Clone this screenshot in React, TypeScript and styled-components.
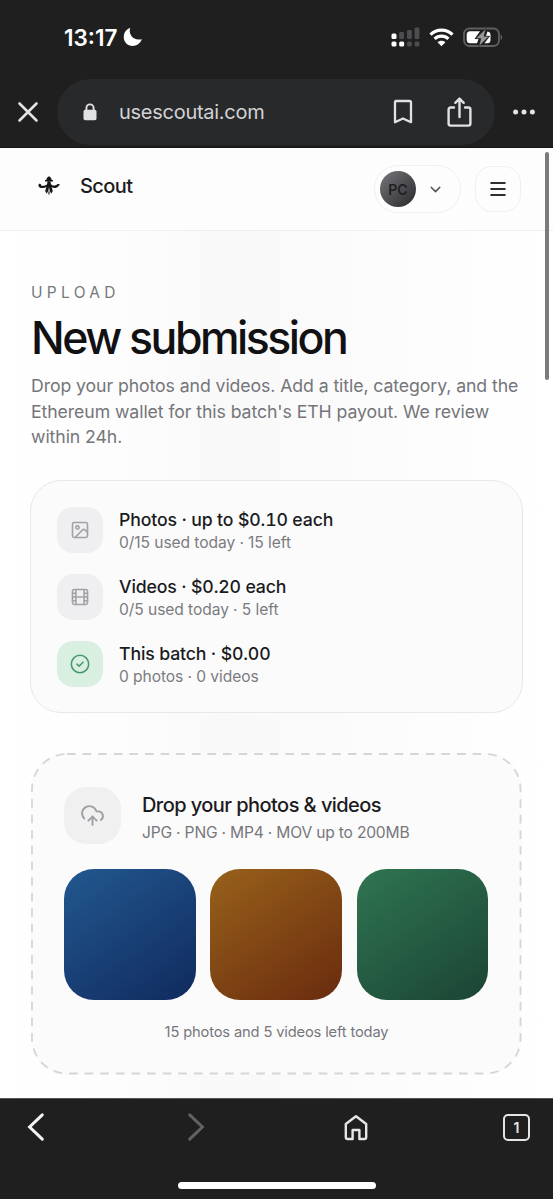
import React from 'react';
import styled, { createGlobalStyle } from 'styled-components';
import { CloudUpload, Film, Image as ImageIcon, ChevronDown } from 'lucide-react';

const GlobalStyle = createGlobalStyle`
  * { box-sizing: border-box; }
  body { margin: 0; background: #1f1f1f; }
  h1, h2, p { margin: 0; font-weight: 400; }
  svg { display: block; flex: none; }
`;

const Screen = styled.div`
  width: 553px;
  height: 1199px;
  display: flex;
  flex-direction: column;
  background: #1f1f1f;
  color: #1b1b1e;
  font-family: Inter, "Liberation Sans", sans-serif;
  overflow: hidden;
`;

const StatusBar = styled.div`
  height: 79px;
  padding: 0 50px 5px 64px;
  display: flex;
  align-items: center;
  justify-content: space-between;
  color: #fff;
`;

const Clock = styled.div`
  display: flex;
  align-items: center;
  gap: 6px;
  font-size: 22.5px;
  font-weight: 600;
  letter-spacing: 0;
`;

const StatusIcons = styled.div`
  display: flex;
  align-items: center;
  gap: 9px;
`;

const AddressRow = styled.div`
  height: 69px;
  display: flex;
  align-items: flex-start;
  padding-left: 17px;
  border-bottom: 1px solid #141414;
`;

const BarButton = styled.div`
  height: 66px;
  display: flex;
  align-items: center;
`;

const AddressPill = styled.div`
  width: 438px;
  height: 66px;
  margin: 0 18px 0 18px;
  padding: 0 23px 0 26px;
  border-radius: 33px;
  background: #28292b;
  display: flex;
  align-items: center;
`;

const Url = styled.span`
  flex: 1;
  margin-left: 22px;
  font-size: 20px;
  letter-spacing: -0.27px;
  color: #d3d3d6;
`;

const PillIcons = styled.div`
  display: flex;
  align-items: center;
  gap: 33px;
`;

const Page = styled.div`
  position: relative;
  height: 950px;
  background: linear-gradient(90deg, #ffffff 0%, #fdfdfe 20%, #f9f9fa 40%, #fafafb 55%, #fdfdfe 80%, #ffffff 100%);
`;

const ScrollThumb = styled.div`
  position: absolute;
  top: 4px;
  right: 4px;
  width: 4px;
  height: 228px;
  border-radius: 2px;
  background: #7b7b7d;
`;

const Header = styled.header`
  height: 83px;
  padding: 0 32px 0 37px;
  border-bottom: 1px solid #f0f0f2;
  background: #fdfdfd;
  display: flex;
  align-items: center;
  justify-content: space-between;
`;

const Brand = styled.div`
  display: flex;
  align-items: center;
  gap: 18px;
  padding-bottom: 7px;
  font-size: 20px;
  font-weight: 500;
  letter-spacing: -0.6px;
`;

const HeaderActions = styled.div`
  display: flex;
  align-items: center;
  gap: 14px;
`;

const AccountButton = styled.div`
  width: 87px;
  height: 48px;
  border: 1px solid #f0f0f2;
  border-radius: 24px;
  background: #fdfdfe;
  display: flex;
  align-items: center;
  gap: 11px;
  padding-left: 5px;
  color: #56565b;
`;

const Avatar = styled.div`
  width: 36px;
  height: 36px;
  border-radius: 50%;
  background: linear-gradient(135deg, #77777b 0%, #505054 50%, #29292c 100%);
  color: #202023;
  font-size: 14px;
  font-weight: 600;
  display: flex;
  align-items: center;
  justify-content: center;
`;

const MenuButton = styled.div`
  width: 46px;
  height: 46px;
  border: 1px solid #f0f0f2;
  border-radius: 17px;
  background: #fdfdfe;
  display: flex;
  align-items: center;
  justify-content: center;
`;

const Main = styled.main`
  padding: 53px 30px 0 30px;
  display: flex;
  flex-direction: column;
`;

const Intro = styled.section`
  padding-left: 1px;
`;

const Eyebrow = styled.p`
  font-size: 15.5px;
  line-height: 18px;
  letter-spacing: 4.3px;
  color: #77777b;
`;

const Title = styled.h1`
  margin-top: 7px;
  font-size: 44.6px;
  line-height: 58px;
  font-weight: 500;
  letter-spacing: -2.5px;
  color: #111113;
`;

const Lead = styled.p`
  margin-top: 6px;
  font-size: 17.7px;
  line-height: 25.7px;
  letter-spacing: -0.09px;
  color: #757579;
  white-space: nowrap;
`;

const QuotaCard = styled.section`
  margin-top: 30px;
  height: 233px;
  padding: 26px;
  border: 1px solid #e8e8ea;
  border-radius: 31px;
  background: #fbfbfc;
  display: flex;
  flex-direction: column;
  gap: 21px;
`;

const QuotaRow = styled.div`
  display: flex;
  align-items: center;
  gap: 16px;
  height: 46px;
`;

const QuotaIcon = styled.div<{ $active?: boolean }>`
  width: 46px;
  height: 46px;
  border-radius: 16px;
  background: ${(p) => (p.$active ? '#d9efe2' : '#efeff1')};
  color: ${(p) => (p.$active ? '#4c9a6c' : '#a2a2a6')};
  display: flex;
  align-items: center;
  justify-content: center;
`;

const QuotaTitle = styled.p`
  padding-top: 2px;
  font-size: 17.7px;
  line-height: 24px;
  font-weight: 500;
  letter-spacing: -0.15px;
  font-variant-numeric: tabular-nums;
`;

const QuotaDetail = styled.p`
  font-size: 15.6px;
  line-height: 22px;
  letter-spacing: -0.08px;
  color: #7c7c80;
`;

const DropZone = styled.section`
  position: relative;
  margin: 40px 0 0 1px;
  width: 491px;
  height: 322px;
  padding: 33px 33px 0;
  border-radius: 36px;
  background: #fbfbfc;
`;

const DashedOutline = styled.svg`
  position: absolute;
  inset: 0;
  width: 491px;
  height: 322px;
`;

const DropHeader = styled.div`
  display: flex;
  align-items: center;
  gap: 21px;
`;

const DropIcon = styled.div`
  width: 57px;
  height: 57px;
  border-radius: 22px;
  background: #f0f0f1;
  color: #a0a0a4;
  display: flex;
  align-items: center;
  justify-content: center;
`;

const DropTitle = styled.h2`
  padding-top: 5px;
  font-size: 20px;
  line-height: 28px;
  font-weight: 500;
  letter-spacing: -0.56px;
`;

const DropFormats = styled.p`
  padding-top: 1px;
  font-size: 15.6px;
  line-height: 25px;
  letter-spacing: -0.19px;
  color: #77777b;
`;

const Swatches = styled.div`
  margin-top: 23.5px;
  display: grid;
  grid-template-columns: repeat(3, 131.5px);
  justify-content: space-between;
  margin-right: 1px;
`;

const Swatch = styled.div<{ $from: string; $to: string }>`
  height: 131.5px;
  border-radius: 30px;
  background: linear-gradient(145deg, ${(p) => p.$from}, ${(p) => p.$to});
`;

const DropFooter = styled.p`
  margin-top: 21px;
  text-align: center;
  font-size: 14.7px;
  line-height: 22px;
  letter-spacing: -0.15px;
  color: #77777b;
`;

const BottomBar = styled.nav`
  flex: 1;
  display: flex;
  flex-direction: column;
  align-items: center;
  justify-content: space-between;
  border-top: 1px solid #555;
  padding-bottom: 10px;
`;

const NavButtons = styled.div`
  width: 553px;
  height: 56px;
  padding: 0 23px 0 26px;
  display: grid;
  grid-template-columns: 160px 158px 1fr auto;
  align-items: center;
`;

const TabCount = styled.div`
  width: 27px;
  height: 27px;
  border: 2.5px solid #e6e6e6;
  border-radius: 5px;
  display: flex;
  align-items: center;
  justify-content: center;
  font-size: 14px;
  font-weight: 600;
  color: #e6e6e6;
`;

const HomeIndicator = styled.div`
  width: 198px;
  height: 7px;
  border-radius: 4px;
  background: #fff;
`;

const Moon = () => (
  <svg width="20" height="20" viewBox="0 0 20 20">
    <path d="M7.2 0.8C5 7.6 10.5 14.3 18.9 12.2C17 16.6 13.6 18.9 9.6 18.9C4.5 18.9 0.8 15 0.8 10.2C0.8 5.8 3.3 2.2 7.2 0.8Z" fill="#fff" />
  </svg>
);

const Signal = () => (
  <svg width="29" height="21" viewBox="0 0 29 21">
    <g fill="#4d4d4f">
      <rect x="8.2" y="5" width="4.8" height="7" rx="1.3" />
      <rect x="16" y="3" width="4.8" height="9" rx="1.3" />
      <rect x="23.6" y="0.5" width="4.8" height="11.5" rx="1.3" />
      <rect x="16" y="14.5" width="4.8" height="5" rx="1.5" />
      <rect x="23.6" y="14.5" width="4.8" height="5" rx="1.5" />
    </g>
    <g fill="#fff">
      <rect x="0.5" y="6.5" width="5" height="5.5" rx="1.5" />
      <rect x="0.5" y="14.5" width="5" height="5" rx="1.5" />
      <rect x="8.2" y="14.5" width="5" height="5" rx="1.5" />
    </g>
  </svg>
);

const Wifi = () => (
  <svg width="25" height="19" viewBox="0 0 25 19" fill="none" stroke="#fff" strokeWidth="3.2">
    <path d="M1.5 6.6C7.7 0.6 17.3 0.6 23.5 6.6" />
    <path d="M5.6 10.8C9.5 7.1 15.5 7.1 19.4 10.8" />
    <path d="M12.5 18.2L8.6 14.2C10.8 12.2 14.2 12.2 16.4 14.2Z" fill="#fff" stroke="none" />
  </svg>
);

const Battery = () => (
  <svg width="40" height="21" viewBox="0 0 40 21">
    <rect x="1" y="1.5" width="35" height="17.5" rx="5.5" fill="none" stroke="#5f5f62" strokeWidth="1.8" />
    <path d="M37.7 7.5C39.7 8.2 39.7 12.3 37.7 13Z" fill="#5f5f62" />
    <path d="M7 4.2H17L11.5 12H15.5L14 16.3H7C5 16.3 3.7 15 3.7 13V7.5C3.7 5.5 5 4.2 7 4.2Z" fill="#fff" />
    <path d="M24.5 4.5C26.7 4.8 27.5 6 27.5 8V13C27.5 15 26.5 16.3 24.3 16.3H21.5L27 9H23Z" fill="#fff" />
    <path d="M23 1.5L12.8 11.6H17.8L15.8 19.5L26.2 9.2H21Z" fill="#98989b" stroke="#1f1f1f" strokeWidth="0.6" />
  </svg>
);

const CloseIcon = () => (
  <svg width="22" height="22" viewBox="0 0 22 22" stroke="#e4e4e5" strokeWidth="2.6" strokeLinecap="round">
    <path d="M2.5 2.5L19.5 19.5M19.5 2.5L2.5 19.5" />
  </svg>
);

const LockIcon = () => (
  <svg width="14" height="18" viewBox="0 0 14 18">
    <path d="M3.4 8V5A3.6 3.6 0 0 1 10.6 5V8" fill="none" stroke="#e1e1e4" strokeWidth="1.9" />
    <rect x="0.5" y="6.8" width="13" height="10.4" rx="1.8" fill="#e1e1e4" />
  </svg>
);

const BookmarkIcon = () => (
  <svg width="20" height="26" viewBox="0 0 20 26" fill="none" stroke="#e1e1e4" strokeWidth="2.3" strokeLinejoin="round">
    <path d="M2.6 2H16.4Q18 2 18 3.6V23.2L10 19.5L2 23.2V3.6Q2 2 3.6 2Z" />
  </svg>
);

const ShareIcon = () => (
  <svg width="26" height="32" viewBox="0 0 26 32" fill="none" stroke="#e1e1e4" strokeWidth="2.4" strokeLinecap="round" strokeLinejoin="round">
    <path d="M8 11.5H4.6Q2.6 11.5 2.6 13.5V27.6Q2.6 29.6 4.6 29.6H22.4Q24.4 29.6 24.4 27.6V13.5Q24.4 11.5 22.4 11.5H19" />
    <path d="M13.5 21V3M9.3 6.8L13.5 2.6L17.7 6.8" />
  </svg>
);

const MoreIcon = () => (
  <svg width="22" height="6" viewBox="0 0 22 6" fill="#e4e4e5">
    <circle cx="2.6" cy="3" r="2.5" />
    <circle cx="11" cy="3" r="2.5" />
    <circle cx="19.4" cy="3" r="2.5" />
  </svg>
);

const BrandMark = () => (
  <svg width="25" height="22" viewBox="0 0 25 22" fill="#161618">
    <path d="M12 1.2C13.6 2 14.6 3.2 14.4 4.4L16 5.2V6.4H8V5.2L9.6 4.4C9.4 3.2 10.4 2 12 1.2Z" />
    <path d="M10.6 6.2H13.4L14 9.2C15.6 11.2 18.6 10.6 20 9.4C21 8.6 22.4 8.8 23 9.8C21.4 10.4 21.2 12.6 18.8 13C17.2 13.2 15.6 12.6 14.6 12L15.8 16L14.2 18.8L13.2 16.6L12 20.4L10.8 16.6L9.8 18.8L8.2 16L9.4 12C7.6 13 4.4 13.4 2.6 12.4C1.2 11.6 1 9.6 2.2 8.8C3.6 8.4 4.4 9.4 4 10.4C6 11 8.8 10.6 10 9.2Z" />
    <path d="M12 12L13 16L12 19L11 16Z" fill="#b9b9bc" />
  </svg>
);

const MenuIcon = () => (
  <svg width="16" height="16" viewBox="0 0 16 16" stroke="#2f2f32" strokeWidth="2" strokeLinecap="round">
    <path d="M1.2 2H14.8M1.2 8H14.8M1.2 14H14.8" />
  </svg>
);

const CheckBadge = () => (
  <svg width="20" height="20" viewBox="0 0 20 20" fill="none" stroke="currentColor" strokeWidth="1.6" strokeLinecap="round" strokeLinejoin="round">
    <circle cx="10" cy="10" r="8.7" />
    <path d="M7 10.2L9.1 12.2L13 8.2" />
  </svg>
);

const BackIcon = () => (
  <svg width="20" height="30" viewBox="0 0 20 30" fill="none" stroke="#f3f3f3" strokeWidth="3" strokeLinecap="round" strokeLinejoin="miter">
    <path d="M16.3 2.8L3.6 15L16.3 27.2" />
  </svg>
);

const ForwardIcon = () => (
  <svg width="20" height="30" viewBox="0 0 20 30" fill="none" stroke="#626264" strokeWidth="3" strokeLinecap="round" strokeLinejoin="miter">
    <path d="M3.7 2.8L16.4 15L3.7 27.2" />
  </svg>
);

const HomeIcon = () => (
  <svg width="24" height="27" viewBox="0 0 24 27" fill="none" stroke="#e6e6e6" strokeWidth="2.4" strokeLinejoin="round">
    <path d="M1.8 10L12 2.2L22.2 10V23.2Q22.2 25 20.4 25H15.4V16H8.6V25H3.6Q1.8 25 1.8 23.2Z" />
  </svg>
);

const quotas = [
  { title: 'Photos · up to $0.10 each', detail: '0/15 used today · 15 left', icon: <ImageIcon size={20} strokeWidth={1.9} /> },
  { title: 'Videos · $0.20 each', detail: '0/5 used today · 5 left', icon: <Film size={20} strokeWidth={1.9} /> },
  { title: 'This batch · $0.00', detail: '0 photos · 0 videos', icon: <CheckBadge />, active: true },
];

const swatches = [
  { from: '#22588f', to: '#102a5e' },
  { from: '#98611b', to: '#692b0e' },
  { from: '#2f7552', to: '#1b4434' },
];

export default function App() {
  return (
    <>
      <GlobalStyle />
      <Screen>
        <StatusBar>
          <Clock>
            13:17
            <Moon />
          </Clock>
          <StatusIcons>
            <Signal />
            <Wifi />
            <Battery />
          </StatusIcons>
        </StatusBar>
        <AddressRow>
          <BarButton><CloseIcon /></BarButton>
          <AddressPill>
            <LockIcon />
            <Url>usescoutai.com</Url>
            <PillIcons>
              <BookmarkIcon />
              <ShareIcon />
            </PillIcons>
          </AddressPill>
          <BarButton><MoreIcon /></BarButton>
        </AddressRow>
        <Page>
          <Header>
            <Brand>
              <BrandMark />
              Scout
            </Brand>
            <HeaderActions>
              <AccountButton>
                <Avatar>PC</Avatar>
                <ChevronDown size={17} strokeWidth={2} />
              </AccountButton>
              <MenuButton><MenuIcon /></MenuButton>
            </HeaderActions>
          </Header>
          <Main>
            <Intro>
              <Eyebrow>UPLOAD</Eyebrow>
              <Title>New submission</Title>
              <Lead>
                Drop your photos and videos. Add a title, category, and the
                <br />
                Ethereum wallet for this batch's ETH payout. We review
                <br />
                within 24h.
              </Lead>
            </Intro>
            <QuotaCard>
              {quotas.map((q) => (
                <QuotaRow key={q.title}>
                  <QuotaIcon $active={q.active}>{q.icon}</QuotaIcon>
                  <div>
                    <QuotaTitle>{q.title}</QuotaTitle>
                    <QuotaDetail>{q.detail}</QuotaDetail>
                  </div>
                </QuotaRow>
              ))}
            </QuotaCard>
            <DropZone>
              <DashedOutline viewBox="0 0 491 322" fill="none">
                <rect x="1" y="1" width="488.5" height="319.5" rx="35" stroke="#d6d6d9" strokeWidth="1.8" strokeDasharray="8.6 7" />
              </DashedOutline>
              <DropHeader>
                <DropIcon><CloudUpload size={25} strokeWidth={1.8} /></DropIcon>
                <div>
                  <DropTitle>Drop your photos &amp; videos</DropTitle>
                  <DropFormats>JPG · PNG · MP4 · MOV up to 200MB</DropFormats>
                </div>
              </DropHeader>
              <Swatches>
                {swatches.map((s) => (
                  <Swatch key={s.from} $from={s.from} $to={s.to} />
                ))}
              </Swatches>
              <DropFooter>15 photos and 5 videos left today</DropFooter>
            </DropZone>
          </Main>
          <ScrollThumb />
        </Page>
        <BottomBar>
          <NavButtons>
            <BackIcon />
            <ForwardIcon />
            <HomeIcon />
            <TabCount>1</TabCount>
          </NavButtons>
          <HomeIndicator />
        </BottomBar>
      </Screen>
    </>
  );
}
